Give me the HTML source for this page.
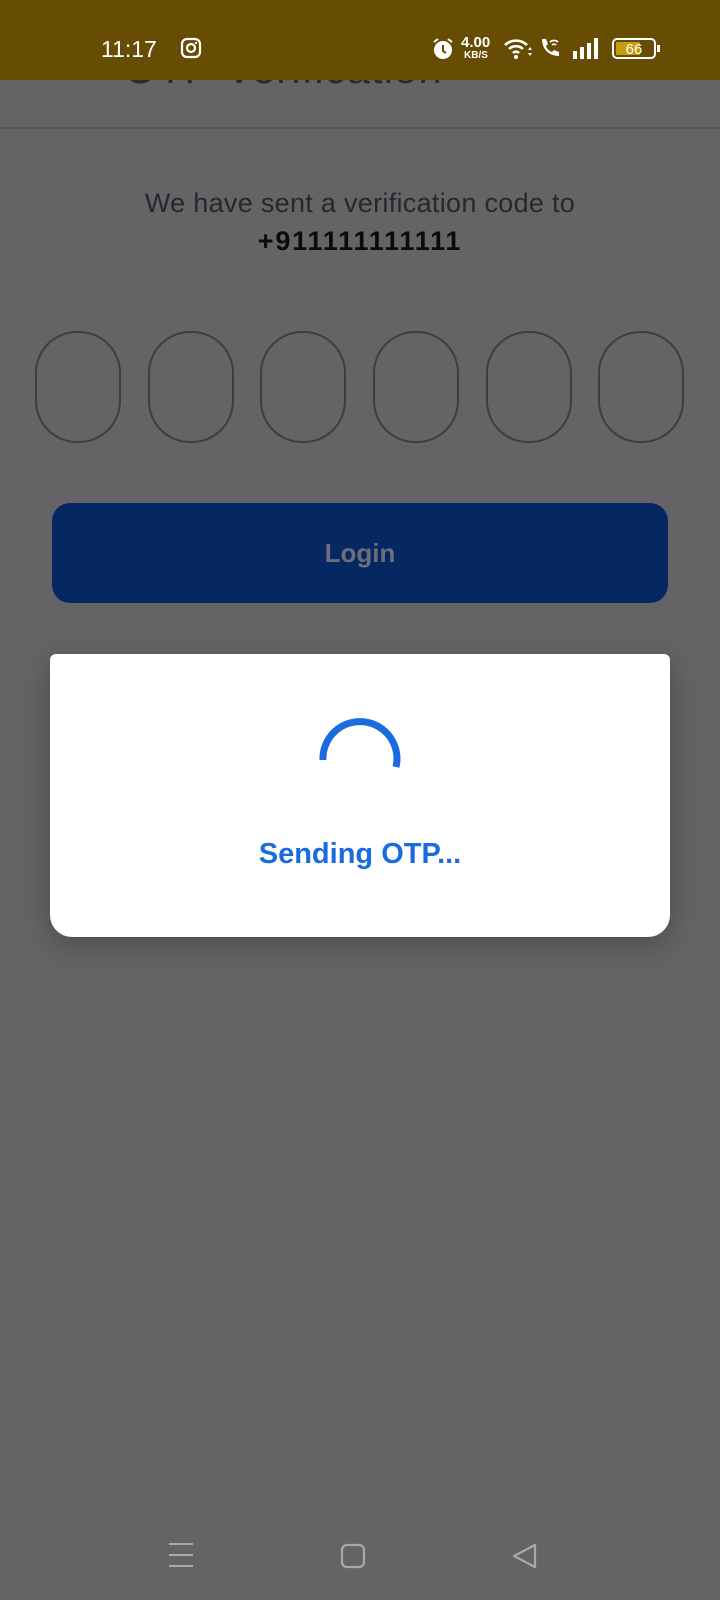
<!DOCTYPE html>
<html><head><meta charset="utf-8"><style>
body{margin:0;width:720px;height:1600px;position:relative;overflow:hidden;background:#656366;font-family:"Liberation Sans",sans-serif}
.sb{position:absolute;left:0;top:0;width:720px;height:80px;background:#674c04;color:#fff}
.abs{position:absolute}
.box{position:absolute;top:331px;width:82px;height:108px;border:2px solid #3e3d40;border-radius:42px}
</style></head><body>
<div class="abs" style="left:124px;top:45px;font-size:42px;color:#2a2a2d;letter-spacing:1px">OTP Verification</div>
<div class="sb">
<div class="abs" style="left:101px;top:36px;font-size:23px">11:17</div>
<svg class="abs" style="left:180px;top:37px" width="22" height="22" viewBox="0 0 22 22"><rect x="2" y="2" width="18" height="18" rx="5" fill="none" stroke="#fff" stroke-width="2.2"/><circle cx="11" cy="11" r="4" fill="none" stroke="#fff" stroke-width="2.2"/><circle cx="16" cy="6" r="1.2" fill="#fff"/></svg>
<svg class="abs" style="left:432px;top:37px" width="22" height="24" viewBox="0 0 22 24"><circle cx="11" cy="13" r="9" fill="#fff"/><path d="M11 8v6l3 2" stroke="#674c04" stroke-width="2" fill="none"/><path d="M2 5l4-3M20 5l-4-3" stroke="#fff" stroke-width="2"/></svg>
<div class="abs" style="left:461px;top:34px;font-size:15px;font-weight:bold">4.00</div>
<div class="abs" style="left:464px;top:50px;font-size:10px;font-weight:bold">KB/S</div>
<svg class="abs" style="left:503px;top:36px" width="30" height="24" viewBox="0 0 30 24"><path d="M2 9a16 16 0 0 1 22 0M6 13a10 10 0 0 1 14 0M10 17a4 4 0 0 1 6 0" stroke="#fff" stroke-width="2.6" fill="none"/><circle cx="13" cy="21" r="2" fill="#fff"/><path d="M25 14l2-3 2 3zM25 17l2 3 2-3z" fill="#fff"/></svg>
<svg class="abs" style="left:538px;top:36px" width="24" height="24" viewBox="0 0 24 24"><path d="M4 3l4 0 2 5-2 2c1 3 3 5 6 6l2-2 5 2v4c-10 0-17-7-17-17z" fill="#fff"/><path d="M12 6a6 6 0 0 1 8 0M14 9a3 3 0 0 1 4 0" stroke="#fff" stroke-width="1.6" fill="none"/></svg>
<svg class="abs" style="left:573px;top:38px" width="28" height="22"><rect x="0" y="13" width="4" height="8" fill="#fff"/><rect x="7" y="9" width="4" height="12" fill="#fff"/><rect x="14" y="5" width="4" height="16" fill="#fff"/><rect x="21" y="0" width="4" height="21" fill="#fff"/></svg>
<svg class="abs" style="left:612px;top:37px" width="50" height="24"><rect x="1" y="2" width="42" height="19" rx="4" fill="none" stroke="#fff" stroke-width="2"/><rect x="4" y="5" width="24" height="13" rx="1" fill="#c89a10"/><rect x="45" y="8" width="3" height="7" fill="#fff"/><text x="22" y="17" font-size="15" fill="#fff" text-anchor="middle" font-family="Liberation Sans">66</text></svg>
</div>
<div class="abs" style="left:0;top:127px;width:720px;height:2px;background:#555457"></div>
<div class="abs" style="left:0;top:188px;width:720px;text-align:center;font-size:27px;color:#28272b;letter-spacing:0.3px">We have sent a verification code to</div>
<div class="abs" style="left:0;top:226px;width:720px;text-align:center;font-size:27px;font-weight:bold;color:#0b0b0c;letter-spacing:1.8px">+911111111111</div>
<div class="box" style="left:35px"></div><div class="box" style="left:148px"></div><div class="box" style="left:260px"></div><div class="box" style="left:373px"></div><div class="box" style="left:486px"></div><div class="box" style="left:598px"></div>
<div class="abs" style="left:52px;top:503px;width:616px;height:100px;background:#062862;border-radius:18px;text-align:center;line-height:100px;font-size:26px;color:#6b6f7a;font-weight:bold">Login</div>
<div class="abs" style="left:50px;top:654px;width:620px;height:283px;background:#fff;border-radius:6px 6px 22px 22px;box-shadow:0 8px 30px rgba(0,0,0,.25)"></div>
<svg class="abs" style="left:316px;top:714px" width="88" height="88" viewBox="0 0 88 88"><path d="M7 46 A37 37 0 1 1 80 53" stroke="#1a6be0" stroke-width="7" fill="none"/></svg>
<div class="abs" style="left:0;top:838px;width:720px;text-align:center;font-size:29px;font-weight:bold;color:#1a6be0">Sending OTP...</div>
<svg class="abs" style="left:168px;top:1542px" width="26" height="26"><path d="M1 2h24M1 13h24M1 24h24" stroke="#a9a8aa" stroke-width="2"/></svg>
<svg class="abs" style="left:340px;top:1543px" width="26" height="26"><rect x="2" y="2" width="22" height="22" rx="5" fill="none" stroke="#a9a8aa" stroke-width="2.2"/></svg>
<svg class="abs" style="left:512px;top:1543px" width="26" height="26"><path d="M23 2v22L2 13z" fill="none" stroke="#a9a8aa" stroke-width="2.2" stroke-linejoin="round"/></svg>
</body></html>
